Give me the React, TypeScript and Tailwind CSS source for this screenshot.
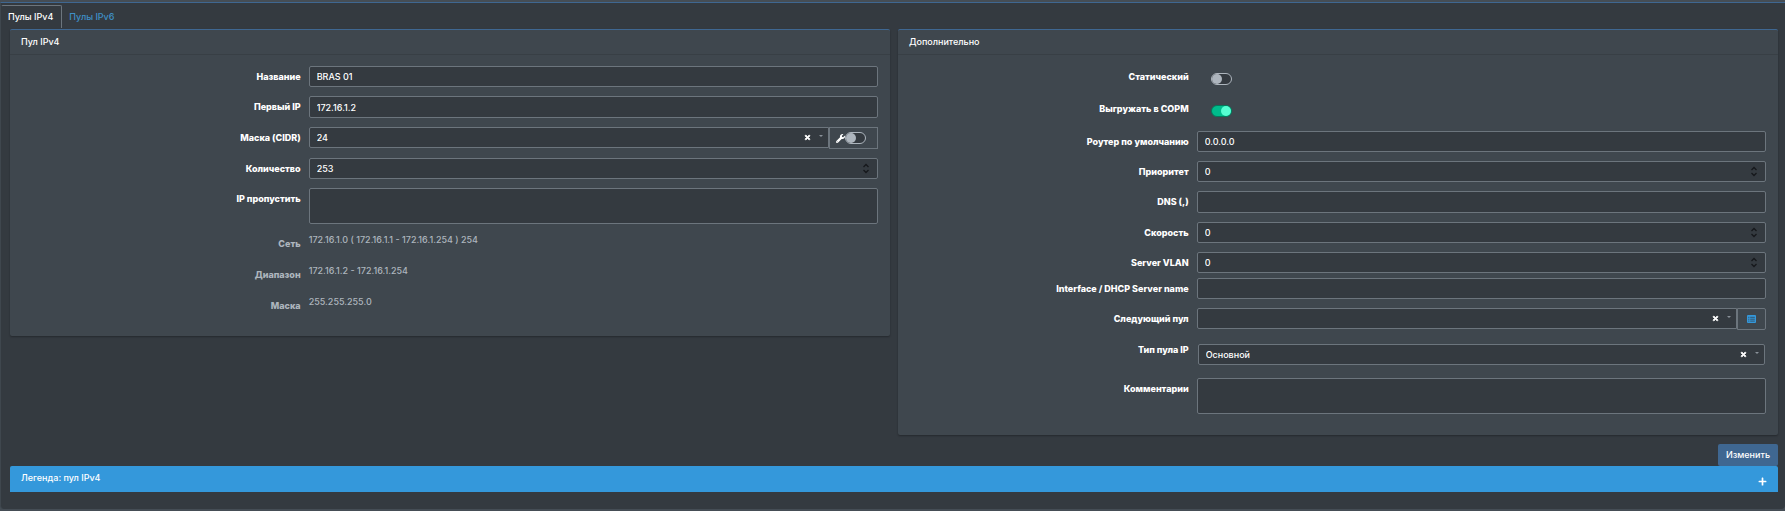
import { ReactNode, useState } from "react";
import { FaTimes, FaWrench, FaPlus } from "react-icons/fa";
import clsx from "clsx";

const fieldClass =
  "w-full rounded-[2px] border border-[#6c757d] bg-[#343a40] text-[9px] text-white outline-none";

const tabs = ["Пулы IPv4", "Пулы IPv6"];

const poolInfo = [
  { label: "Сеть", value: "172.16.1.0 ( 172.16.1.1 - 172.16.1.254 ) 254" },
  { label: "Диапазон", value: "172.16.1.2 - 172.16.1.254" },
  { label: "Маска", value: "255.255.255.0" },
];

type RowProps = { label: string; htmlFor: string; className?: string; children: ReactNode };

const Row = ({ label, htmlFor, className, children }: RowProps) => (
  <div className={clsx("grid grid-cols-3 items-start gap-x-2", className)}>
    <label htmlFor={htmlFor} className="text-right font-extrabold leading-[21px] text-white">
      {label}
    </label>
    <div className="col-span-2 min-w-0">{children}</div>
  </div>
);

const TextField = ({ id, value = "", tall = false }: { id: string; value?: string; tall?: boolean }) => (
  <input
    id={id}
    type="text"
    defaultValue={value}
    className={clsx(fieldClass, "block px-[7px]", tall ? "h-[22px]" : "h-[21px]")}
  />
);

const NumberField = ({ id, value }: { id: string; value: number }) => {
  const [current, setCurrent] = useState(value);

  return (
    <div className={clsx(fieldClass, "flex h-[21px] items-center px-[7px]")}>
      <input
        id={id}
        type="number"
        value={current}
        onChange={(e) => setCurrent(Number(e.target.value))}
        className="min-w-0 flex-1 bg-transparent outline-none [appearance:textfield] [&::-webkit-inner-spin-button]:appearance-none"
      />
      <svg viewBox="0 0 8 11" width={8} height={11} fill="none" stroke="#16181b" strokeWidth={1.3}>
        <path d="M1.5 4 4 1.5 6.5 4M1.5 7 4 9.5 6.5 7" />
      </svg>
    </div>
  );
};

type SelectProps = { id: string; options: string[]; className?: string };

const SelectField = ({ id, options, className }: SelectProps) => (
  <div className={clsx(fieldClass, "flex h-[21px] items-center pr-[5px] pl-[7px]", className)}>
    <select id={id} className="min-w-0 flex-1 appearance-none bg-transparent outline-none">
      {options.map((option) => (
        <option key={option}>{option}</option>
      ))}
    </select>
    <button type="button" aria-label="Очистить" className="mr-2">
      <FaTimes size={7} strokeWidth={60} stroke="currentColor" />
    </button>
    <svg viewBox="0 0 4 2" width={4} height={2} className="mb-1 fill-[#8a9199]">
      <path d="M0 0h4L2 2z" />
    </svg>
  </div>
);

const Switch = ({ id, checked = false, label }: { id: string; checked?: boolean; label?: string }) => (
  <input
    id={id}
    type="checkbox"
    role="switch"
    aria-label={label}
    defaultChecked={checked}
    className="block h-3 w-[21px] shrink-0 appearance-none rounded-full border border-[#adb5bd] bg-[#343a40] before:block before:size-[10px] before:rounded-full before:bg-[#adb5bd] checked:border-[#037a5c] checked:bg-[#00bc8c] checked:before:ml-[9px] checked:before:bg-[#56ffd3]"
  />
);

const ListIcon = () => (
  <svg viewBox="0 0 9 8" width={9} height={8}>
    <rect width={9} height={8} rx={1} fill="#3498db" />
    <path
      d="M1.2 2.3h1.2M3.2 2.3h4.6M1.2 4.2h1.2M3.2 4.2h4.6M1.2 6.1h1.2M3.2 6.1h4.6"
      stroke="#343a40"
      strokeWidth={0.7}
    />
  </svg>
);

const Card = ({ title, children }: { title: string; children: ReactNode }) => (
  <section className="min-w-0 flex-1 rounded-[2px] border-t border-[#3f6791] bg-[#3f474e] shadow-[0_1px_2px_rgba(0,0,0,0.3)]">
    <h2 className="border-b border-[#383f45] px-[11px] leading-[24px] text-white">{title}</h2>
    <div className="flex flex-col gap-[9px] pt-[11px] pr-3 pl-2.5">{children}</div>
  </section>
);

const App = () => {
  const [activeTab, setActiveTab] = useState(tabs[0]);

  return (
    <div className="min-h-screen bg-[#454d55] pb-0.5 font-['Inter','Liberation_Sans',sans-serif] text-[9px] font-medium text-white">
      <div className="h-0.5" />
      <main className="min-h-[507px] rounded-b border-t border-l border-t-[#3f6791] border-l-[#3f474e] bg-[#343a40]">
        <nav className="flex pt-0.5">
          {tabs.map((tab) => (
            <button
              key={tab}
              type="button"
              onClick={() => setActiveTab(tab)}
              className={clsx(
                "h-[23px] rounded-t-[2px] border border-b-0 pr-2 pl-1.5",
                activeTab === tab ? "border-[#6c757d] border-l-transparent text-white" : "border-transparent text-[#3f8fc5]"
              )}
            >
              {tab}
            </button>
          ))}
        </nav>

        <form className="mt-px pr-[7px] pl-[9px]">
          <div className="flex items-start gap-2">
            <Card title="Пул IPv4">
              <Row label="Название" htmlFor="name">
                <TextField id="name" value="BRAS 01" />
              </Row>
              <Row label="Первый IP" htmlFor="first-ip">
                <TextField id="first-ip" value="172.16.1.2" tall />
              </Row>
              <Row label="Маска (CIDR)" htmlFor="mask">
                <div className="flex items-start">
                  <SelectField id="mask" options={["24"]} className="flex-1 rounded-r-none" />
                  <div className="flex h-[22px] w-[49px] items-center border border-[#6c757d] pl-1.5">
                    <FaWrench size={9} />
                    <Switch id="manual-mask" label="Ручной ввод" />
                  </div>
                </div>
              </Row>
              <Row label="Количество" htmlFor="count">
                <NumberField id="count" value={253} />
              </Row>
              <Row label="IP пропустить" htmlFor="skip-ip">
                <textarea id="skip-ip" className={clsx(fieldClass, "block h-9 resize-none px-[7px]")} />
              </Row>
              <dl className="pb-[10px] text-[#adb5bd]">
                {poolInfo.map(({ label, value }) => (
                  <div key={label} className="grid h-[31px] grid-cols-3 gap-x-2">
                    <dt className="pt-1 text-right font-extrabold leading-[14px]">{label}</dt>
                    <dd className="col-span-2 leading-[14px]">{value}</dd>
                  </div>
                ))}
              </dl>
            </Card>

            <Card title="Дополнительно">
              <Row label="Статический" htmlFor="static">
                <div className="flex h-[23px] items-center pt-0.5 pl-3.5">
                  <Switch id="static" />
                </div>
              </Row>
              <Row label="Выгружать в СОРМ" htmlFor="sorm">
                <div className="flex h-[24px] items-center pt-0.5 pl-3.5">
                  <Switch id="sorm" checked />
                </div>
              </Row>
              <Row label="Роутер по умолчанию" htmlFor="router">
                <TextField id="router" value="0.0.0.0" />
              </Row>
              <Row label="Приоритет" htmlFor="priority">
                <NumberField id="priority" value={0} />
              </Row>
              <Row label="DNS (,)" htmlFor="dns">
                <TextField id="dns" tall />
              </Row>
              <Row label="Скорость" htmlFor="speed">
                <NumberField id="speed" value={0} />
              </Row>
              <div className="flex flex-col gap-[5px]">
                <Row label="Server VLAN" htmlFor="server-vlan">
                  <NumberField id="server-vlan" value={0} />
                </Row>
                <Row label="Interface / DHCP Server name" htmlFor="interface">
                  <TextField id="interface" />
                </Row>
              </div>
              <Row label="Следующий пул" htmlFor="next-pool">
                <div className="flex items-start">
                  <SelectField id="next-pool" options={[""]} className="flex-1 rounded-r-none" />
                  <button
                    type="button"
                    aria-label="Список пулов"
                    className="flex h-[22px] w-[29px] items-center justify-center rounded-r-[2px] border border-[#6c757d]"
                  >
                    <ListIcon />
                  </button>
                </div>
              </Row>
              <Row label="Тип пула IP" htmlFor="pool-type">
                <div className="px-px pt-[5px] pb-1">
                  <SelectField id="pool-type" options={["Основной"]} />
                </div>
              </Row>
              <Row label="Комментарии" htmlFor="comments" className="pb-[21px]">
                <textarea id="comments" className={clsx(fieldClass, "block h-9 resize-none px-[7px]")} />
              </Row>
            </Card>
          </div>

          <div className="mt-[9px] flex justify-end">
            <button type="submit" className="h-[22px] rounded-[2px] bg-[#3f6791] px-2 text-white">
              Изменить
            </button>
          </div>
          <button type="button" className="flex h-[26px] w-full items-center justify-between rounded-t-[2px] bg-[#3498db] px-[11px]">
            <span className="pb-0.5">Легенда: пул IPv4</span>
            <FaPlus size={9} className="mt-1" />
          </button>
        </form>
      </main>
    </div>
  );
};

export default App;
